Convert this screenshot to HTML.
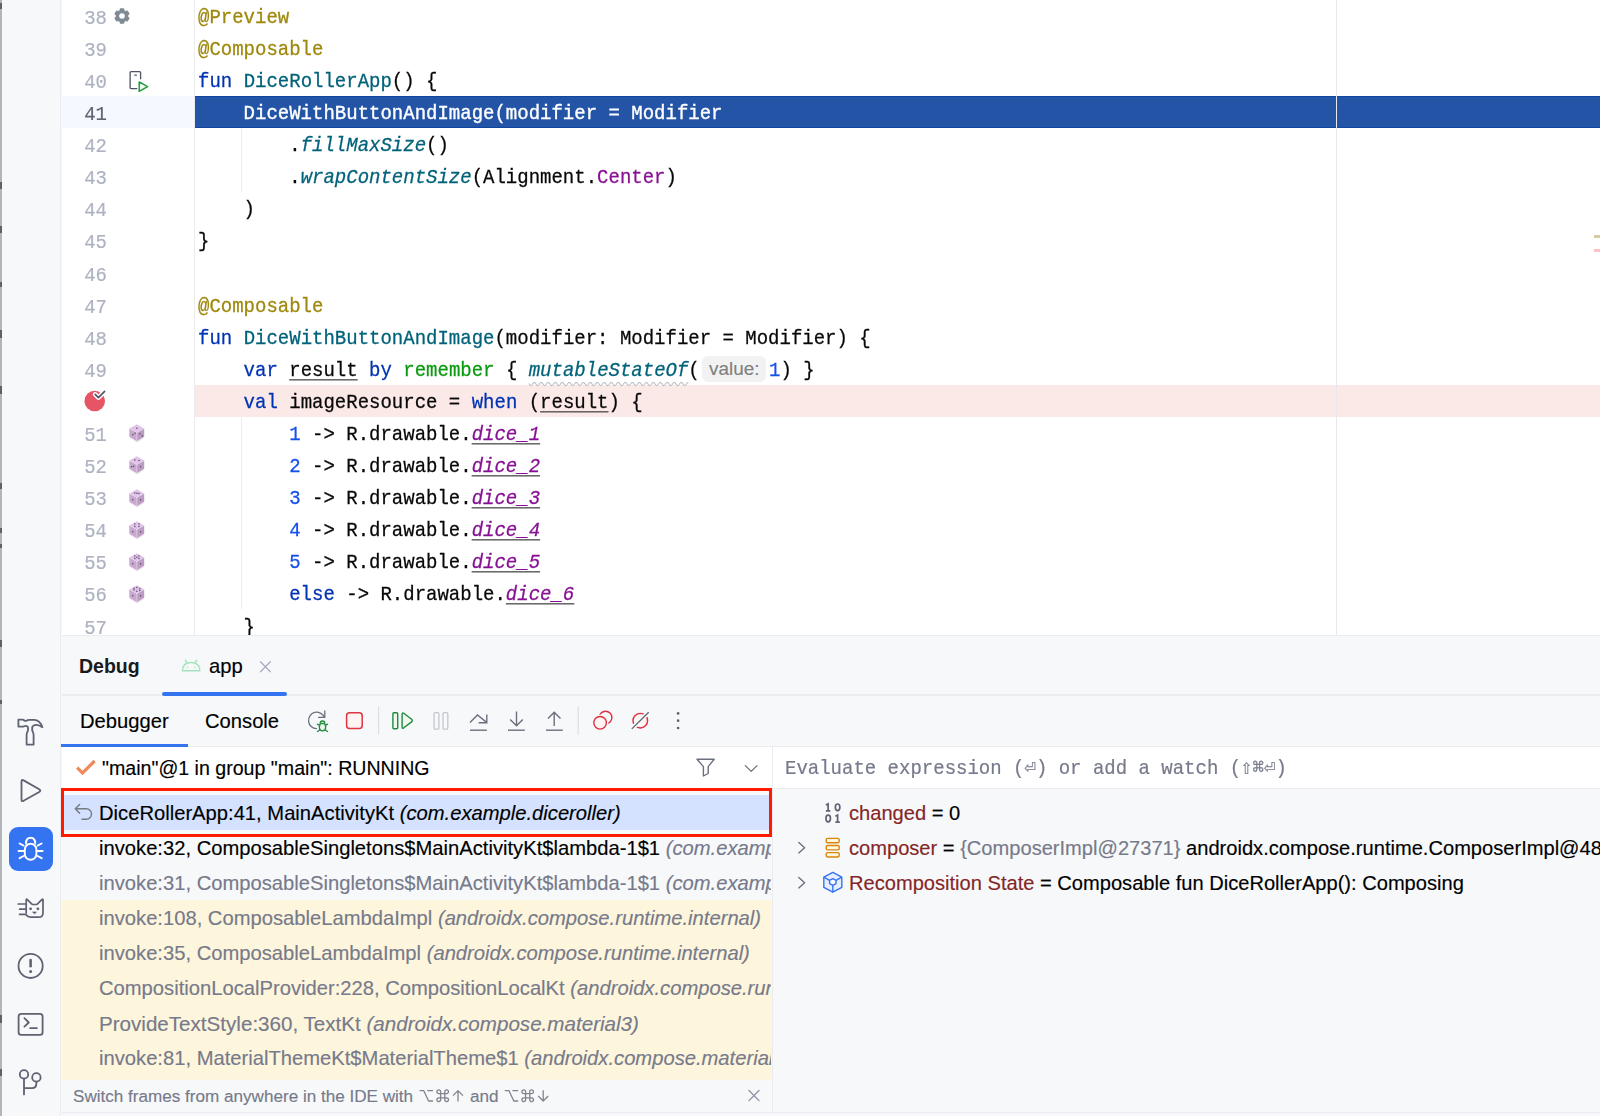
<!DOCTYPE html>
<html><head><meta charset="utf-8">
<style>
*{margin:0;padding:0;box-sizing:border-box}
html,body{width:1600px;height:1116px;overflow:hidden;background:#f7f8fa}
body{position:relative;font-family:"Liberation Sans",sans-serif}
.abs{position:absolute}
#edge{left:0;top:0;width:2px;height:1116px;background:#b4b5b8}
#strip{left:2px;top:0;width:59px;height:1116px;background:#f7f8fa;border-right:1px solid #ebecf0}
#editor{left:62px;top:0;width:1538px;height:635px;background:#fff;overflow:hidden}
#gutter{left:0;top:0;width:133px;height:635px;background:#fff}
.ln{position:absolute;left:0;width:45px;text-align:right;font-family:"Liberation Mono",monospace;font-size:19px;line-height:32px;height:32px;color:#aeb3c2;padding-top:2.5px;transform:scaleY(1.1);transform-origin:0 24px;-webkit-text-stroke:0.2px currentColor}
.code{position:absolute;left:136px;transform:scaleY(1.1);transform-origin:0 23px;-webkit-text-stroke:0.25px currentColor;font-family:"Liberation Mono",monospace;font-size:19px;line-height:32px;height:32px;white-space:pre;color:#080808;padding-top:2px}
.kw{color:#0033b3}
.an{color:#9e880d}
.fn{color:#00627a}
.it{font-style:italic}
.pr{color:#871094}
.nm{color:#1750eb}
.gr{color:#0c9a10}
.ul{text-decoration:underline}
.ui{font-family:"Liberation Sans",sans-serif;white-space:pre;line-height:35px;-webkit-text-stroke:0.15px currentColor}
.mono{font-family:"Liberation Mono",monospace;white-space:pre;line-height:35px}
.frame{left:99px;font-size:20.2px;width:672px;overflow:hidden;height:35px;padding-top:1px}
.g{color:#767a8a}
.var{left:849px;font-size:20.1px;color:#000;height:35px;padding-top:1.3px}
.vn{color:#842626}
.exec{color:#fff;-webkit-text-stroke:0.35px #fff}
.ln.cur{color:#5f6472}
.hint{display:inline-block;font-family:"Liberation Sans",sans-serif;font-size:16.5px;line-height:26px;height:26px;vertical-align:top;margin-top:0px;padding:0 7px 0 7px;margin-left:3px;margin-right:3px;background:#f2f2f2;border-radius:6px;color:#8a8a8a;position:relative;top:-0.5px}
.wavy{text-decoration:underline wavy #b9bcc4;text-decoration-thickness:1px;text-underline-offset:5px}
.ul{text-underline-offset:3px;text-decoration-thickness:1px;text-decoration-color:#2b2b2b}
</style></head><body>
<div id="edge" class="abs"></div>
<div id="strip" class="abs"></div>
<div class="abs" style="left:0;top:3px;width:2px;height:6px;background:#2a2a2a;opacity:.6"></div><div class="abs" style="left:0;top:182px;width:2px;height:7px;background:#2a2a2a;opacity:.6"></div><div class="abs" style="left:0;top:226px;width:2px;height:7px;background:#2a2a2a;opacity:.6"></div><div class="abs" style="left:0;top:282px;width:2px;height:5px;background:#2a2a2a;opacity:.6"></div><div class="abs" style="left:0;top:330px;width:2px;height:8px;background:#2a2a2a;opacity:.6"></div><div class="abs" style="left:0;top:386px;width:2px;height:8px;background:#2a2a2a;opacity:.6"></div><div class="abs" style="left:0;top:483px;width:2px;height:6px;background:#2a2a2a;opacity:.6"></div><div class="abs" style="left:0;top:528px;width:2px;height:5px;background:#2a2a2a;opacity:.6"></div><div class="abs" style="left:0;top:544px;width:2px;height:4px;background:#2a2a2a;opacity:.6"></div><div class="abs" style="left:0;top:640px;width:2px;height:7px;background:#2a2a2a;opacity:.6"></div><div class="abs" style="left:0;top:700px;width:2px;height:4px;background:#2a2a2a;opacity:.6"></div><div class="abs" style="left:0;top:1015px;width:2px;height:8px;background:#2a2a2a;opacity:.6"></div><div class="abs" style="left:0;top:1069px;width:2px;height:7px;background:#2a2a2a;opacity:.6"></div>
<div id="editor" class="abs">
<div class="abs" style="left:0;top:96px;width:132px;height:32px;background:#f5f8fe"></div>
<div class="abs" style="left:132px;top:0;width:1px;height:635px;background:#ebecf0"></div>
<div class="abs" style="left:133px;top:96px;width:1405px;height:32px;background:#2354a6;border-top:1px solid #0f47a0;border-bottom:1px solid #0f47a0"></div>
<div class="abs" style="left:133px;top:385px;width:1405px;height:32px;background:#fae9e7"></div>
<div class="abs" style="left:1274px;top:0;width:1px;height:635px;background:#e8e8ee"></div>
<div class="abs" style="left:179px;top:128px;width:1px;height:64px;background:#ebecf0"></div>
<div class="abs" style="left:179px;top:417px;width:1px;height:192px;background:#ebecf0"></div>
<div class="ln" style="top:-0.2px">38</div>
<div class="code" style="top:-0.2px"><span class="an">@Preview</span></div>
<div class="ln" style="top:31.89px">39</div>
<div class="code" style="top:31.89px"><span class="an">@Composable</span></div>
<div class="ln" style="top:63.98px">40</div>
<div class="code" style="top:63.98px"><span class="kw">fun</span> <span class="fn">DiceRollerApp</span>() {</div>
<div class="ln cur" style="top:96.07px">41</div>
<div class="code exec" style="top:96.07px">    DiceWithButtonAndImage(modifier = Modifier</div>
<div class="ln" style="top:128.16px">42</div>
<div class="code" style="top:128.16px">        .<span class="fn it">fillMaxSize</span>()</div>
<div class="ln" style="top:160.25px">43</div>
<div class="code" style="top:160.25px">        .<span class="fn it">wrapContentSize</span>(Alignment.<span class="pr">Center</span>)</div>
<div class="ln" style="top:192.34px">44</div>
<div class="code" style="top:192.34px">    )</div>
<div class="ln" style="top:224.43px">45</div>
<div class="code" style="top:224.43px">}</div>
<div class="ln" style="top:256.52px">46</div>
<div class="code" style="top:256.52px"></div>
<div class="ln" style="top:288.61px">47</div>
<div class="code" style="top:288.61px"><span class="an">@Composable</span></div>
<div class="ln" style="top:320.7px">48</div>
<div class="code" style="top:320.7px"><span class="kw">fun</span> <span class="fn">DiceWithButtonAndImage</span>(modifier: Modifier = Modifier) {</div>
<div class="ln" style="top:352.79px">49</div>
<div class="code" style="top:352.79px">    <span class="kw">var</span> <span class="ul">result</span> <span class="kw">by</span> <span class="gr">remember</span> { <span class="fn it wavy">mutableStateOf</span>(<span style="display:inline-block;width:69.3px"></span><span class="nm">1</span>) }</div>
<div class="code" style="top:384.88px">    <span class="kw">val</span> imageResource = <span class="kw">when</span> (<span class="ul">result</span>) {</div>
<div class="ln" style="top:416.97px">51</div>
<div class="code" style="top:416.97px">        <span class="nm">1</span> -&gt; R.drawable.<span class="pr it ul">dice_1</span></div>
<div class="ln" style="top:449.06px">52</div>
<div class="code" style="top:449.06px">        <span class="nm">2</span> -&gt; R.drawable.<span class="pr it ul">dice_2</span></div>
<div class="ln" style="top:481.15px">53</div>
<div class="code" style="top:481.15px">        <span class="nm">3</span> -&gt; R.drawable.<span class="pr it ul">dice_3</span></div>
<div class="ln" style="top:513.24px">54</div>
<div class="code" style="top:513.24px">        <span class="nm">4</span> -&gt; R.drawable.<span class="pr it ul">dice_4</span></div>
<div class="ln" style="top:545.33px">55</div>
<div class="code" style="top:545.33px">        <span class="nm">5</span> -&gt; R.drawable.<span class="pr it ul">dice_5</span></div>
<div class="ln" style="top:577.42px">56</div>
<div class="code" style="top:577.42px">        <span class="kw">else</span> -&gt; R.drawable.<span class="pr it ul">dice_6</span></div>
<div class="ln" style="top:609.51px">57</div>
<div class="code" style="top:609.51px">    }</div>
</div>


<div class="abs" style="left:702px;top:356px;width:63.5px;height:26px;border-radius:6px;background:#f2f2f2"></div><div class="abs ui" style="left:709px;top:350.5px;font-size:18.9px;color:#808080">value:</div>
<!-- gutter icons -->
<svg class="abs" style="left:114px;top:8px" width="16" height="16" viewBox="0 0 16 16"><path d="M5.72,3.11 L6.36,0.89 L9.64,0.89 L10.28,3.11 L11.10,3.58 L13.34,3.02 L14.98,5.87 L13.38,7.53 L13.38,8.47 L14.98,10.13 L13.34,12.98 L11.10,12.42 L10.28,12.89 L9.64,15.11 L6.36,15.11 L5.72,12.89 L4.90,12.42 L2.66,12.98 L1.02,10.13 L2.62,8.47 L2.62,7.53 L1.02,5.87 L2.66,3.02 L4.90,3.58 Z" fill="#7f8a94" stroke="#7f8a94" stroke-width="1.1" stroke-linejoin="round"/><circle cx="8" cy="8" r="2.8" fill="#fff"/></svg>
<svg class="abs" style="left:128px;top:69px" width="24" height="25" viewBox="0 0 24 25"><path d="M12.6,9.8 V3.8 Q12.6,2.7 11.5,2.7 H3.2 Q2.1,2.7 2.1,3.8 V18.6 Q2.1,19.7 3.2,19.7 H8.8" fill="none" stroke="#4e5366" stroke-width="1.3" stroke-linecap="round"/><path d="M6.8,6.2 H8.4" stroke="#4e5366" stroke-width="1.2" stroke-linecap="round"/><path d="M11.2,12.9 L19.6,17.6 L11.2,22.3 Z" fill="#effaf1" stroke="#1f9b3a" stroke-width="1.5" stroke-linejoin="round"/></svg>
<svg class="abs" style="left:82px;top:388px" width="26" height="26" viewBox="0 0 26 26"><defs><mask id="bpm"><rect width="26" height="26" fill="#fff"/><path d="M13.2,6.4 L16.4,9.6 L22.6,3.4" stroke="#000" stroke-width="4.6" fill="none" stroke-linecap="round" stroke-linejoin="round"/></mask></defs><circle cx="12.7" cy="13" r="10.3" fill="#e55565" mask="url(#bpm)"/><path d="M13.2,6.4 L16.4,9.6 L22.6,3.4" stroke="#4d5363" stroke-width="1.6" fill="none" stroke-linecap="round" stroke-linejoin="round"/></svg>
<svg class="abs" style="left:128.5px;top:424.4px" width="16" height="19" viewBox="0 0 16 19"><path d="M0.8,13.2 L7.9,17.6 L15.2,13.2 L15.2,14 L7.9,18.4 L0.8,14 Z" fill="#e8e4ea"/><path d="M7.9,0.2 L15.2,4.4 L7.9,8.6 L0.3,4.4 Z" fill="#e2c4ea"/><path d="M0.3,4.4 L7.9,8.6 L7.9,17.2 L0.3,12.8 Z" fill="#c9a8cf"/><path d="M7.9,8.6 L15.2,4.4 L15.2,12.8 L7.9,17.2 Z" fill="#bd9cc3"/><path d="M0.3,4.4 L7.9,8.6 L15.2,4.4 M7.9,8.6 V17.2" stroke="#e9dcec" stroke-width="0.6" fill="none"/><circle cx="7.9" cy="4.2" r="0.75" fill="#5a4560"/><circle cx="3.8" cy="10.8" r="0.75" fill="#5a4560"/><circle cx="11.0" cy="9.8" r="0.75" fill="#5a4560"/><circle cx="13.2" cy="11.8" r="0.75" fill="#5a4560"/><circle cx="6.0" cy="9.3" r="0.75" fill="#5a4560"/></svg><svg class="abs" style="left:128.5px;top:456.49px" width="16" height="19" viewBox="0 0 16 19"><path d="M0.8,13.2 L7.9,17.6 L15.2,13.2 L15.2,14 L7.9,18.4 L0.8,14 Z" fill="#e8e4ea"/><path d="M7.9,0.2 L15.2,4.4 L7.9,8.6 L0.3,4.4 Z" fill="#e2c4ea"/><path d="M0.3,4.4 L7.9,8.6 L7.9,17.2 L0.3,12.8 Z" fill="#c9a8cf"/><path d="M7.9,8.6 L15.2,4.4 L15.2,12.8 L7.9,17.2 Z" fill="#bd9cc3"/><path d="M0.3,4.4 L7.9,8.6 L15.2,4.4 M7.9,8.6 V17.2" stroke="#e9dcec" stroke-width="0.6" fill="none"/><circle cx="5.8" cy="4.0" r="0.75" fill="#5a4560"/><circle cx="10.0" cy="4.6" r="0.75" fill="#5a4560"/><circle cx="2.6" cy="10.8" r="0.75" fill="#5a4560"/><circle cx="4.6" cy="10.2" r="0.75" fill="#5a4560"/><circle cx="11.6" cy="10.8" r="0.75" fill="#5a4560"/></svg><svg class="abs" style="left:128.5px;top:488.58px" width="16" height="19" viewBox="0 0 16 19"><path d="M0.8,13.2 L7.9,17.6 L15.2,13.2 L15.2,14 L7.9,18.4 L0.8,14 Z" fill="#e8e4ea"/><path d="M7.9,0.2 L15.2,4.4 L7.9,8.6 L0.3,4.4 Z" fill="#e2c4ea"/><path d="M0.3,4.4 L7.9,8.6 L7.9,17.2 L0.3,12.8 Z" fill="#c9a8cf"/><path d="M7.9,8.6 L15.2,4.4 L15.2,12.8 L7.9,17.2 Z" fill="#bd9cc3"/><path d="M0.3,4.4 L7.9,8.6 L15.2,4.4 M7.9,8.6 V17.2" stroke="#e9dcec" stroke-width="0.6" fill="none"/><circle cx="5.8" cy="4.0" r="0.75" fill="#5a4560"/><circle cx="7.9" cy="4.2" r="0.75" fill="#5a4560"/><circle cx="10.0" cy="4.6" r="0.75" fill="#5a4560"/><circle cx="3.8" cy="10.8" r="0.75" fill="#5a4560"/><circle cx="11.6" cy="10.8" r="0.75" fill="#5a4560"/></svg><svg class="abs" style="left:128.5px;top:520.67px" width="16" height="19" viewBox="0 0 16 19"><path d="M0.8,13.2 L7.9,17.6 L15.2,13.2 L15.2,14 L7.9,18.4 L0.8,14 Z" fill="#e8e4ea"/><path d="M7.9,0.2 L15.2,4.4 L7.9,8.6 L0.3,4.4 Z" fill="#e2c4ea"/><path d="M0.3,4.4 L7.9,8.6 L7.9,17.2 L0.3,12.8 Z" fill="#c9a8cf"/><path d="M7.9,8.6 L15.2,4.4 L15.2,12.8 L7.9,17.2 Z" fill="#bd9cc3"/><path d="M0.3,4.4 L7.9,8.6 L15.2,4.4 M7.9,8.6 V17.2" stroke="#e9dcec" stroke-width="0.6" fill="none"/><circle cx="5.8" cy="3.0" r="0.75" fill="#5a4560"/><circle cx="10.0" cy="5.4" r="0.75" fill="#5a4560"/><circle cx="5.8" cy="5.4" r="0.75" fill="#5a4560"/><circle cx="10" cy="3" r="0.75" fill="#5a4560"/><circle cx="3.8" cy="10.8" r="0.75" fill="#5a4560"/><circle cx="11.6" cy="10.8" r="0.75" fill="#5a4560"/></svg><svg class="abs" style="left:128.5px;top:552.76px" width="16" height="19" viewBox="0 0 16 19"><path d="M0.8,13.2 L7.9,17.6 L15.2,13.2 L15.2,14 L7.9,18.4 L0.8,14 Z" fill="#e8e4ea"/><path d="M7.9,0.2 L15.2,4.4 L7.9,8.6 L0.3,4.4 Z" fill="#e2c4ea"/><path d="M0.3,4.4 L7.9,8.6 L7.9,17.2 L0.3,12.8 Z" fill="#c9a8cf"/><path d="M7.9,8.6 L15.2,4.4 L15.2,12.8 L7.9,17.2 Z" fill="#bd9cc3"/><path d="M0.3,4.4 L7.9,8.6 L15.2,4.4 M7.9,8.6 V17.2" stroke="#e9dcec" stroke-width="0.6" fill="none"/><circle cx="5.8" cy="3.0" r="0.75" fill="#5a4560"/><circle cx="10.0" cy="5.4" r="0.75" fill="#5a4560"/><circle cx="5.8" cy="5.4" r="0.75" fill="#5a4560"/><circle cx="10" cy="3" r="0.75" fill="#5a4560"/><circle cx="7.9" cy="4.2" r="0.75" fill="#5a4560"/><circle cx="3.8" cy="10.8" r="0.75" fill="#5a4560"/><circle cx="11.6" cy="10.8" r="0.75" fill="#5a4560"/></svg><svg class="abs" style="left:128.5px;top:584.85px" width="16" height="19" viewBox="0 0 16 19"><path d="M0.8,13.2 L7.9,17.6 L15.2,13.2 L15.2,14 L7.9,18.4 L0.8,14 Z" fill="#e8e4ea"/><path d="M7.9,0.2 L15.2,4.4 L7.9,8.6 L0.3,4.4 Z" fill="#e2c4ea"/><path d="M0.3,4.4 L7.9,8.6 L7.9,17.2 L0.3,12.8 Z" fill="#c9a8cf"/><path d="M7.9,8.6 L15.2,4.4 L15.2,12.8 L7.9,17.2 Z" fill="#bd9cc3"/><path d="M0.3,4.4 L7.9,8.6 L15.2,4.4 M7.9,8.6 V17.2" stroke="#e9dcec" stroke-width="0.6" fill="none"/><circle cx="5.0" cy="3.2" r="0.75" fill="#5a4560"/><circle cx="7.9" cy="2.4" r="0.75" fill="#5a4560"/><circle cx="10.8" cy="3.8" r="0.75" fill="#5a4560"/><circle cx="5.0" cy="5.0" r="0.75" fill="#5a4560"/><circle cx="7.9" cy="6.2" r="0.75" fill="#5a4560"/><circle cx="10.8" cy="5.4" r="0.75" fill="#5a4560"/><circle cx="3.8" cy="10.8" r="0.75" fill="#5a4560"/><circle cx="11.6" cy="10.8" r="0.75" fill="#5a4560"/></svg>

<!-- left strip icons -->
<svg class="abs" style="left:8px;top:706px" width="48" height="48" viewBox="0 0 48 48"><path d="M10.4,13.7 H14.3 Q15.6,13.7 16.4,14.5 Q17.4,15.3 18.6,14.6 Q19.8,13.8 21.2,13.8 H26.2 Q31.8,13.8 34.4,21.2 Q30.8,18.6 28,18.8 Q25.2,19 24.2,21.2 V24.4 Q25.6,26.6 25.6,28.8 V38.6 H18.6 V28.8 Q18.6,26.6 20,24.4 V21.2 Q19.2,19.6 17.6,19.8 Q16.6,19.9 15.8,20.3 Q15,20.6 14,20.6 H10.4 Z" fill="none" stroke="#5e6271" stroke-width="1.8" stroke-linejoin="round"/></svg>
<svg class="abs" style="left:8px;top:766px" width="48" height="48" viewBox="0 0 48 48"><path d="M13.5,15.6 Q13.5,13.2 15.6,14.4 L31.2,23.2 Q33.4,24.6 31.2,26 L15.6,34.8 Q13.5,36 13.5,33.6 Z" fill="none" stroke="#5e6271" stroke-width="1.8" stroke-linejoin="round"/></svg>
<div class="abs" style="left:9px;top:827px;width:43.5px;height:44px;border-radius:9px;background:#3574f0"></div>
<svg class="abs" style="left:8px;top:826px" width="46" height="46" viewBox="0 0 46 46"><g fill="none" stroke="#fff" stroke-width="1.9" stroke-linecap="round"><path d="M18,17.6 Q18,11.8 22.6,11.8 Q27.2,11.8 27.2,17.6"/><rect x="16.8" y="17.8" width="11.6" height="16" rx="5.8"/><path d="M11.6,17.5 L15.6,19.6 M10.6,25 H15.6 M11.6,32.2 L15.6,30 M33.6,17.5 L29.6,19.6 M34.6,25 H29.6 M33.6,32.2 L29.6,30"/></g></svg>
<svg class="abs" style="left:8px;top:884px" width="48" height="48" viewBox="0 0 48 48"><g fill="none" stroke="#5e6271" stroke-width="1.7" stroke-linecap="round" stroke-linejoin="round"><path d="M18.2,29 V16.2 Q18.2,14.6 19.4,15.6 L23.6,19.8 Q24.4,20.5 25.4,20.5 H27.8 Q28.8,20.5 29.6,19.8 L33.8,15.6 Q35,14.6 35,16.2 V29 Q35,33.2 30.8,33.2 H22.4 Q19.6,33.2 18.2,30.8"/><path d="M10.2,20 H17.6 M11.6,25.2 H17.6 M11.6,30.4 H17.6"/></g><circle cx="22.6" cy="24.8" r="1.4" fill="#5e6271"/><circle cx="29.9" cy="24.8" r="1.4" fill="#5e6271"/><path d="M24.6,28.1 H28.4 L26.5,29.7 Z" fill="#5e6271" stroke="#5e6271" stroke-width="0.8" stroke-linejoin="round"/></svg>
<svg class="abs" style="left:8px;top:942px" width="48" height="48" viewBox="0 0 48 48"><circle cx="22.6" cy="23.9" r="12.1" fill="none" stroke="#5e6271" stroke-width="1.8"/><path d="M22.6,18 V24.2" stroke="#5e6271" stroke-width="2.6" stroke-linecap="round"/><circle cx="22.6" cy="29.5" r="1.5" fill="#5e6271"/></svg>
<svg class="abs" style="left:8px;top:1000px" width="48" height="48" viewBox="0 0 48 48"><rect x="10.6" y="13.8" width="24" height="21" rx="2.6" fill="none" stroke="#5e6271" stroke-width="1.8"/><path d="M16.4,18.2 L20.8,22.5 L16.4,26.6 M22.2,28.2 H28.9" fill="none" stroke="#5e6271" stroke-width="1.8" stroke-linecap="round" stroke-linejoin="round"/></svg>
<svg class="abs" style="left:8px;top:1058px" width="48" height="48" viewBox="0 0 48 48"><g fill="none" stroke="#5e6271" stroke-width="1.8" stroke-linecap="round"><circle cx="16" cy="16.4" r="4.2"/><circle cx="28.4" cy="19.4" r="4.2"/><path d="M16,20.6 V36.4 M28.4,23.6 V25.6 Q28.4,30.2 23.8,30.2 H16"/></g></svg>

<!-- toolbar icons -->
<svg class="abs" style="left:300px;top:700px" width="120" height="45" viewBox="0 0 120 45"><path d="M16.5,28.6 A8.2,8.2 0 1,1 24.3,17.2" fill="none" stroke="#6c707e" stroke-width="1.3" stroke-linecap="round"/><path d="M24.8,11 V17.4 H18.6" fill="none" stroke="#6c707e" stroke-width="1.3" stroke-linecap="round" stroke-linejoin="round"/><g fill="none" stroke="#208a3c" stroke-width="1.3" stroke-linecap="round"><path d="M20.2,23.2 Q20.2,21 22.5,21 Q24.8,21 24.8,23.2"/><rect x="19.4" y="23.3" width="6.2" height="7.6" rx="3.1" fill="#e9f6ec"/><path d="M17.4,24.2 L19.3,25.2 M27.6,24.2 L25.7,25.2 M17.4,31.5 L19.4,30.3 M27.6,31.5 L25.6,30.3"/></g><rect x="46.6" y="12.7" width="15.6" height="15.9" rx="3" fill="#fff4f4" stroke="#e0343f" stroke-width="1.5"/><rect x="78" y="6.4" width="1.2" height="28.5" fill="#dcdfe6"/><rect x="92.9" y="12.7" width="4.8" height="16" rx="1" fill="#eef8f0" stroke="#208a3c" stroke-width="1.4"/><path d="M102.1,14.2 Q102.1,12.3 103.8,13.3 L111.6,19.3 Q113,20.6 111.6,21.9 L103.8,27.8 Q102.1,28.9 102.1,27 Z" fill="#eef8f0" stroke="#208a3c" stroke-width="1.4" stroke-linejoin="round"/></svg>
<svg class="abs" style="left:420px;top:700px" width="160" height="45" viewBox="0 0 160 45"><rect x="14.1" y="12.6" width="4.8" height="16.6" rx="1.2" fill="none" stroke="#c3c6ce" stroke-width="1.3"/><rect x="23" y="12.6" width="4.8" height="16.6" rx="1.2" fill="none" stroke="#c3c6ce" stroke-width="1.3"/><g fill="none" stroke="#6c707e" stroke-width="1.4" stroke-linecap="butt" stroke-linejoin="miter"><path d="M50,22.6 L57.5,15 L66.6,22.4"/><path d="M66.8,14.6 V22.8 H58.6"/><path d="M50,30.2 H66.8"/><path d="M96.5,11.4 V25.4 M90.2,19.4 L96.5,25.8 L102.8,19.4"/><path d="M88,30.2 H104.8"/><path d="M134.2,26 V12.6 M128,18.6 L134.2,12.2 L140.5,18.6"/><path d="M126,30.2 H142.8"/></g><rect x="157.6" y="6.4" width="1.2" height="28.5" fill="#dcdfe6"/></svg>
<svg class="abs" style="left:570px;top:700px" width="130" height="45" viewBox="0 0 130 45"><defs><mask id="m2"><rect width="130" height="45" fill="#fff"/><circle cx="30.1" cy="22.8" r="8.2" fill="#000"/></mask><mask id="m3"><rect width="130" height="45" fill="#fff"/><path d="M61.8,28.9 L78.7,12.2" stroke="#000" stroke-width="4.5"/></mask></defs><circle cx="35.6" cy="17.5" r="6.3" fill="none" stroke="#df2e3d" stroke-width="1.4" mask="url(#m2)"/><circle cx="30.1" cy="22.8" r="6.3" fill="#fff4f4" stroke="#df2e3d" stroke-width="1.4"/><circle cx="70.3" cy="20.7" r="7.3" fill="#fff4f4" stroke="#df2e3d" stroke-width="1.4" mask="url(#m3)"/><path d="M61.8,28.9 L78.7,12.2" stroke="#5f6370" stroke-width="1.3"/><circle cx="108.1" cy="13.4" r="1.35" fill="#5f6370"/><circle cx="108.1" cy="20.7" r="1.35" fill="#5f6370"/><circle cx="108.1" cy="28" r="1.35" fill="#5f6370"/></svg>
<!-- debug tool window -->
<div class="abs" style="left:62px;top:635px;width:1538px;height:1px;background:#ebecf0"></div>
<div class="abs ui" style="left:79px;top:649px;font-weight:bold;font-size:19.5px;color:#1a1a1a;-webkit-text-stroke:0">Debug</div>
<div class="abs" style="left:182px;top:659px;width:18px;height:13px" id="droid"></div>
<div class="abs ui" style="left:209px;top:649px;font-size:20.2px;color:#000">app</div>
<div class="abs" style="left:260px;top:661px;width:11px;height:11px" id="tabx"></div>
<div class="abs" style="left:162px;top:691.5px;width:125px;height:4px;border-radius:2px;background:#3574f0;z-index:2"></div>
<div class="abs" style="left:62px;top:694px;width:1538px;height:1.5px;background:#ebecf0"></div>
<div class="abs ui" style="left:80px;top:704px;font-size:20.2px;color:#000">Debugger</div>
<div class="abs ui" style="left:205px;top:704px;font-size:20.2px;color:#000">Console</div>
<div class="abs" style="left:61px;top:744px;width:127px;height:3px;background:#3574f0;z-index:2"></div>
<div class="abs" style="left:62px;top:746px;width:1538px;height:1px;background:#ebecf0"></div>
<!-- frames panel -->
<div class="abs" style="left:62px;top:747px;width:710px;height:41px;background:#fff"></div>
<div class="abs" style="left:772px;top:747px;width:1px;height:365px;background:#ebecf0"></div>
<div class="abs" style="left:773px;top:747px;width:827px;height:41px;background:#fff"></div>
<div class="abs" style="left:773px;top:788px;width:827px;height:1px;background:#ebecf0"></div>
<div class="abs ui" style="left:102px;top:751px;font-size:19.6px;color:#000">"main"@1 in group "main": RUNNING</div>
<div class="abs" style="left:62px;top:795px;width:710px;height:35px;background:#d4e2ff"></div>
<div class="abs" style="left:62px;top:900px;width:710px;height:180px;background:#fef5dd"></div>
<div class="abs ui frame" style="top:795px;color:#000">DiceRollerApp:41, MainActivityKt <i>(com.example.diceroller)</i></div>
<div class="abs ui frame" style="top:830px;color:#000">invoke:32, ComposableSingletons$MainActivityKt$lambda-1$1 <i class="g">(com.example.diceroller)</i></div>
<div class="abs ui frame g" style="top:865px">invoke:31, ComposableSingletons$MainActivityKt$lambda-1$1 <i>(com.example.diceroller)</i></div>
<div class="abs ui frame g" style="top:900px">invoke:108, ComposableLambdaImpl <i>(androidx.compose.runtime.internal)</i></div>
<div class="abs ui frame g" style="top:935px">invoke:35, ComposableLambdaImpl <i>(androidx.compose.runtime.internal)</i></div>
<div class="abs ui frame g" style="top:970px">CompositionLocalProvider:228, CompositionLocalKt <i>(androidx.compose.runtime)</i></div>
<div class="abs ui frame g" style="top:1005px;font-size:20.6px">ProvideTextStyle:360, TextKt <i>(androidx.compose.material3)</i></div>
<div class="abs ui frame g" style="top:1040px">invoke:81, MaterialThemeKt$MaterialTheme$1 <i>(androidx.compose.material3)</i></div>
<div class="abs" style="left:62px;top:1080px;width:710px;height:32px;background:#f7f8fa"></div>
<div class="abs ui g" style="left:73px;top:1079px;font-size:17.1px">Switch frames from anywhere in the IDE with</div><div class="abs ui g" style="left:470px;top:1079px;font-size:17.1px">and</div><svg class="abs" style="left:0;top:0" width="600" height="1116" viewBox="0 0 600 1116"><g fill="none" stroke="#80848f" stroke-width="1.3" stroke-linejoin="round"><path d="M419.6,1090.7 H423.8 L428.6,1101 H433.0 M427.20000000000005,1090.7 H433.0" /><path d="M440.6,1093.6 H444.8 V1097.8 H440.6 Z M440.6,1093.6 V1092.2 A1.9,1.9 0 1,0 438.70000000000005,1093.6 H440.6 M444.8,1093.6 V1092.2 A1.9,1.9 0 1,1 446.70000000000005,1093.6 H444.8 M440.6,1097.8 V1099.2 A1.9,1.9 0 1,1 438.70000000000005,1097.8 H440.6 M444.8,1097.8 V1099.2 A1.9,1.9 0 1,0 446.70000000000005,1097.8 H444.8" /><path d="M458,1101.6 V1090.8 M453,1095.6 L458,1090.6 L463,1095.6" /><path d="M504.8,1090.7 H509.0 L513.8,1101 H518.2 M512.4,1090.7 H518.2" /><path d="M525.6,1093.6 H529.8000000000001 V1097.8 H525.6 Z M525.6,1093.6 V1092.2 A1.9,1.9 0 1,0 523.7,1093.6 H525.6 M529.8000000000001,1093.6 V1092.2 A1.9,1.9 0 1,1 531.7,1093.6 H529.8000000000001 M525.6,1097.8 V1099.2 A1.9,1.9 0 1,1 523.7,1097.8 H525.6 M529.8000000000001,1097.8 V1099.2 A1.9,1.9 0 1,0 531.7,1097.8 H529.8000000000001" /><path d="M543.2,1090.2 V1101 M538.2,1096 L543.2,1101 L548.2,1096" /></g></svg>
<div class="abs" style="left:62px;top:1112px;width:1538px;height:1px;background:#ebecf0"></div>
<div class="abs" style="left:61px;top:788px;width:711px;height:49px;border:3.5px solid #ff1a00"></div>
<!-- variables -->
<div class="abs mono" style="left:785px;top:752px;font-size:19px;color:#767a8b;transform:scaleY(1.1);transform-origin:0 22px;-webkit-text-stroke:0.2px #767a8b">Evaluate expression (&#x23ce;) or add a watch (&#x21e7;&#x2318;&#x23ce;)</div>
<div class="abs ui var" style="top:795px"><span class="vn">changed</span> = 0</div>
<div class="abs ui var" style="top:830px"><span class="vn">composer</span> = <span class="g">{ComposerImpl@27371}</span> androidx.compose.runtime.ComposerImpl@48a1b2c</div>
<div class="abs ui var" style="top:865px"><span class="vn">Recomposition State</span> = Composable fun DiceRollerApp(): Composing</div>

<!-- misc icons -->
<svg class="abs" style="left:176px;top:650px" width="30" height="30" viewBox="0 0 30 30"><path d="M9.4,10.2 L10.9,13 M20.7,10.2 L19.2,13 M6.5,20.8 Q6.5,12.5 15.1,12.5 Q23.8,12.5 23.8,20.8 Z" fill="none" stroke="#a3e3be" stroke-width="1.4" stroke-linecap="round" stroke-linejoin="round"/><circle cx="11.5" cy="17.3" r="0.8" fill="#a3e3be"/><circle cx="18.7" cy="17.3" r="0.8" fill="#a3e3be"/></svg>
<svg class="abs" style="left:256px;top:657px" width="20" height="20" viewBox="0 0 20 20"><path d="M4.5,4.7 L14.3,14.8 M14.3,4.7 L4.5,14.8" stroke="#a8adbd" stroke-width="1.3" stroke-linecap="round"/></svg>
<svg class="abs" style="left:66px;top:752px" width="40" height="30" viewBox="0 0 40 30"><path d="M11.2,15.6 L16.5,21 L28.6,9" fill="none" stroke="#f0895a" stroke-width="3.2" stroke-linejoin="miter" stroke-linecap="butt"/></svg>
<svg class="abs" style="left:690px;top:750px" width="80" height="34" viewBox="0 0 80 34"><path d="M7,9.2 H24.2 L18.2,16.6 V23.5 L13.4,26 V16.6 Z" fill="none" stroke="#6c707e" stroke-width="1.4" stroke-linejoin="round"/><path d="M55.3,15.6 L61.2,21.4 L67,15.6" fill="none" stroke="#6c707e" stroke-width="1.3" stroke-linecap="round" stroke-linejoin="round"/></svg>
<svg class="abs" style="left:68px;top:798px" width="32" height="30" viewBox="0 0 32 30"><path d="M11.6,6.5 L7.3,10.75 L11.6,15.3 M7.6,10.75 H18.3 A5.2,5.2 0 0,1 18.3,21.2 H14" fill="none" stroke="#767a82" stroke-width="1.4" stroke-linecap="round" stroke-linejoin="round"/></svg>
<svg class="abs" style="left:744px;top:1086px" width="20" height="20" viewBox="0 0 20 20"><path d="M5,4.5 L15,14.6 M15,4.5 L5,14.6" stroke="#8c90a0" stroke-width="1.3" stroke-linecap="round"/></svg>
<div class="abs" style="left:1594px;top:235px;width:6px;height:3px;background:#d6cea3"></div>
<div class="abs" style="left:1594px;top:249px;width:6px;height:3px;background:#ffc2c2"></div>
<!-- variable icons -->
<svg class="abs" style="left:0;top:0" width="900" height="830" viewBox="0 0 900 830"><g fill="none" stroke="#5e6272" stroke-width="1.7"><path d="M825.9,805.0999999999999 L828.0999999999999,803.9 V810.9 M825.9,810.9 H830.3"/><ellipse cx="837.6" cy="807.3" rx="2.25" ry="3.3"/><ellipse cx="828.2" cy="818.5" rx="2.25" ry="3.3"/><path d="M835.4,816.3 L837.5999999999999,815.1 V822.1 M835.4,822.1 H839.8"/></g></svg>
<svg class="abs" style="left:780px;top:830px" width="80" height="70" viewBox="0 0 80 70"><path d="M18.8,12.5 L24.6,17.7 L18.8,22.9 M18.8,47.5 L24.6,52.7 L18.8,57.9" fill="none" stroke="#6c707e" stroke-width="1.4" stroke-linecap="round" stroke-linejoin="round"/><g fill="#fff7e0" stroke="#d9860b" stroke-width="1.4"><rect x="46.2" y="8.4" width="13" height="4.4" rx="1.4"/><rect x="46.2" y="15.5" width="13" height="4.4" rx="1.4"/><rect x="46.2" y="22.6" width="13" height="4.4" rx="1.4"/></g><g fill="none" stroke="#3574f0" stroke-width="1.4" stroke-linejoin="round"><path d="M52.8,42.4 L61.8,47.2 V57.4 L52.8,62.2 L43.8,57.4 V47.2 Z" fill="#e6eeff"/><path d="M43.8,47.2 L49.6,50.4 M61.8,47.2 L56,50.4 M52.8,55.2 V62.2"/><path d="M49.6,50.4 L52.8,48.6 L56,50.4 V53.6 L52.8,55.3 L49.6,53.6 Z" fill="#fff"/></g></svg>
</body></html>
